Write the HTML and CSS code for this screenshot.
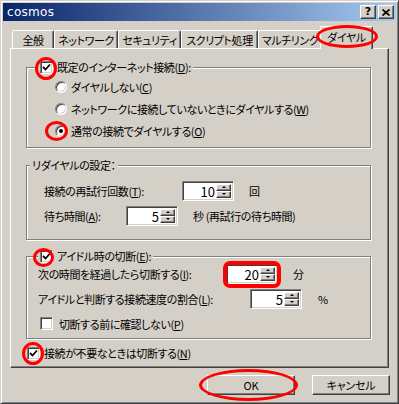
FILE: index.html
```html
<!DOCTYPE html>
<html lang="ja">
<head>
  <meta charset="UTF-8">
  <title>cosmos</title>
  <link rel="stylesheet" href="styles.css">
</head>
<body>

  <div class="window">

    <!-- タイトルバー -->
    <div class="titlebar">
      <span class="title">cosmos</span>
      <div class="caption-btns">
        <span class="cbtn help">?</span>
        <span class="cbtn">
          <svg width="8" height="7" viewBox="0 0 8 7"><path d="M0.5 0.5 L7.5 6.5 M7.5 0.5 L0.5 6.5" stroke="#000" stroke-width="1.7"/></svg>
        </span>
      </div>
    </div>

    <!-- タブ -->
    <div class="tabs">
      <div class="tab t1">全般</div>
      <div class="tab t2">ネットワーク</div>
      <div class="tab t3">セキュリティ</div>
      <div class="tab t4">スクリプト処理</div>
      <div class="tab t5">マルチリンク</div>
      <div class="tab active">ダイヤル</div>
    </div>

    <div class="panel">

      <!-- 既定のインターネット接続 -->
      <div class="group g1">
        <div class="group-title with-check">
          <span class="check on"><svg width="9" height="9" viewBox="0 0 9 9"><path d="M1 4 L3.5 6.5 L8 1.5" fill="none" stroke="#000" stroke-width="1.8"/></svg></span>
          <span>既定のインターネット接続(<u>D</u>):</span>
        </div>
        <div class="radios">
          <div class="radio-row"><span class="radio"></span><span>ダイヤルしない(<u>C</u>)</span></div>
          <div class="radio-row"><span class="radio"></span><span>ネットワークに接続していないときにダイヤルする(<u>W</u>)</span></div>
          <div class="radio-row"><span class="radio on"></span><span>通常の接続でダイヤルする(<u>O</u>)</span></div>
        </div>
      </div>

      <!-- リダイヤルの設定 -->
      <div class="group g2">
        <div class="group-title plain">リダイヤルの設定：</div>
        <div class="rows">
          <div class="row">
            <span class="lbl lbl-retry">接続の再試行回数(<u>T</u>):</span>
            <div class="spin">
              <span class="spin-val">10</span>
              <div class="spin-btns"><span class="sb up"></span><span class="sb down"></span></div>
            </div>
            <span class="unit">回</span>
          </div>
          <div class="row">
            <span class="lbl lbl-wait">待ち時間(<u>A</u>):</span>
            <div class="spin">
              <span class="spin-val">5</span>
              <div class="spin-btns"><span class="sb up"></span><span class="sb down"></span></div>
            </div>
            <span class="unit">秒 (再試行の待ち時間)</span>
          </div>
        </div>
      </div>

      <!-- アイドル時の切断 -->
      <div class="group g3">
        <div class="group-title with-check">
          <span class="check on"><svg width="9" height="9" viewBox="0 0 9 9"><path d="M1 4 L3.5 6.5 L8 1.5" fill="none" stroke="#000" stroke-width="1.8"/></svg></span>
          <span>アイドル時の切断(<u>E</u>):</span>
        </div>
        <div class="rows idle">
          <div class="row">
            <span class="lbl lbl-idle">次の時間を経過したら切断する(<u>I</u>):</span>
            <div class="spin">
              <span class="spin-val">20</span>
              <div class="spin-btns"><span class="sb up"></span><span class="sb down"></span></div>
            </div>
            <span class="unit">分</span>
          </div>
          <div class="row">
            <span class="lbl lbl-rate">アイドルと判断する接続速度の割合(<u>L</u>):</span>
            <div class="spin">
              <span class="spin-val">5</span>
              <div class="spin-btns"><span class="sb up"></span><span class="sb down"></span></div>
            </div>
            <span class="unit unit-pct">%</span>
          </div>
          <div class="row check-row">
            <span class="check"></span>
            <span>切断する前に確認しない(<u>P</u>)</span>
          </div>
        </div>
      </div>

      <div class="bottom-check">
        <span class="check on"><svg width="9" height="9" viewBox="0 0 9 9"><path d="M1 4 L3.5 6.5 L8 1.5" fill="none" stroke="#000" stroke-width="1.8"/></svg></span>
        <span>接続が不要なときは切断する(<u>N</u>)</span>
      </div>

    </div>

    <!-- ボタン -->
    <div class="actions">
      <button class="btn btn-ok">OK</button>
      <button class="btn btn-cancel">キャンセル</button>
    </div>

    <!-- 赤い丸印 -->
    <span class="mark m-tab"></span>
    <span class="mark m-check1"></span>
    <span class="mark m-radio"></span>
    <span class="mark m-check3"></span>
    <span class="mark m-check4"></span>
    <span class="mark m-spin"></span>
    <span class="mark m-ok"></span>

  </div>

</body>
</html>
```

FILE: styles.css
```css
body {
  margin: 0;
  font-family: "Noto Sans CJK JP", sans-serif;
  font-size: 11px;
  line-height: 14px;
  letter-spacing: -0.4px;
  font-feature-settings: "palt";
  white-space: nowrap;
  color: #000;
  background: #d4d0c8;
}

.window {
  position: relative;
  width: 399px;
  height: 404px;
  box-sizing: border-box;
  background: #d4d0c8;
  border: 1px solid;
  border-color: #d4d0c8 #404040 #404040 #d4d0c8;
  box-shadow: inset 1px 1px #fff, inset -1px -1px #808080;
  padding: 2px;
}

/* title bar */
.titlebar {
  height: 18px;
  display: flex;
  align-items: center;
  justify-content: space-between;
  background: linear-gradient(90deg, #0a246a, #a6caf0);
  padding: 0 2px 0 4px;
}

.title {
  font-family: "DejaVu Sans", sans-serif;
  font-size: 12px;
  color: #fff;
  letter-spacing: 0.3px;
}

.caption-btns {
  display: flex;
  gap: 2px;
}

.cbtn {
  width: 16px;
  height: 14px;
  box-sizing: border-box;
  background: #d4d0c8;
  border: 1px solid;
  border-color: #fff #404040 #404040 #fff;
  box-shadow: inset -1px -1px #808080;
  display: flex;
  align-items: center;
  justify-content: center;
}

.cbtn.help {
  font-family: "DejaVu Sans", sans-serif;
  font-weight: bold;
  font-size: 11px;
  line-height: 12px;
  letter-spacing: 0;
}

/* tabs */
.tabs {
  display: flex;
  align-items: flex-end;
  height: 22px;
  margin-top: 5px;
  padding-left: 9px;
}

.tab {
  height: 18px;
  box-sizing: border-box;
  border-top: 1px solid #fff;
  border-left: 1px solid #fff;
  border-right: 1px solid #404040;
  box-shadow: inset -1px 0 #808080;
  border-radius: 2px 2px 0 0;
  display: flex;
  align-items: center;
  justify-content: center;
  padding-top: 1px;
}

.t1 { width: 42px; }
.t2 { width: 64px; }
.t3 { width: 63px; }
.t4 { width: 77px; }
.t5 { width: 64px; }

.tab.active {
  width: 53px;
  height: 23px;
  margin: 0 -2px -1px -2px;
  background: #d4d0c8;
  z-index: 1;
  padding-top: 0;
  padding-bottom: 3px;
}

/* panel */
.panel {
  width: 379px;
  height: 320px;
  margin-left: 7px;
  box-sizing: border-box;
  border: 1px solid;
  border-color: #fff #404040 #404040 #fff;
  box-shadow: inset -1px -1px #808080;
  padding-top: 18px;
}

.group {
  width: 345px;
  box-sizing: border-box;
  margin-left: 15px;
  border: 1px solid #808080;
  box-shadow: inset 1px 1px #fff, 1px 1px #fff;
}

.group-title {
  display: flex;
  align-items: center;
  gap: 4px;
  width: max-content;
  height: 14px;
  margin-top: -8px;
  background: #d4d0c8;
}

.group-title.with-check {
  margin-left: 11px;
  padding: 0 2px;
}

.group-title.plain {
  margin-left: 3px;
  padding: 0 2px;
}

/* checkbox / radio */
.check {
  width: 13px;
  height: 13px;
  box-sizing: border-box;
  background: #fff;
  border: 1px solid;
  border-color: #808080 #fff #fff #808080;
  box-shadow: inset 1px 1px #404040, inset -1px -1px #d4d0c8;
  display: flex;
  align-items: center;
  justify-content: center;
  flex: none;
}

.radios {
  padding: 2px 0 5px 28px;
}

.radio-row {
  height: 22px;
  display: flex;
  align-items: center;
  gap: 4px;
}

.radio {
  width: 12px;
  height: 12px;
  box-sizing: border-box;
  border-radius: 50%;
  background: #fff;
  border: 1px solid;
  border-color: #808080 #fff #fff #808080;
  box-shadow: inset 1px 1px #404040, inset -1px -1px #d4d0c8;
  display: flex;
  align-items: center;
  justify-content: center;
  flex: none;
}

.radio.on::after {
  content: "";
  width: 4px;
  height: 4px;
  border-radius: 50%;
  background: #000;
}

/* rows with spinners */
.g2 {
  margin-top: 17px;
}

.g3 {
  margin-top: 16px;
}

.rows {
  display: flex;
  flex-direction: column;
  padding: 6px 0 11px 17px;
}

.row {
  height: 25px;
  display: flex;
  align-items: center;
}

.rows.idle {
  padding: 0 0 4px 11px;
  gap: 4px;
}

.rows.idle .row {
  height: 21px;
}

.lbl { flex: none; }
.lbl-retry { width: 138px; }
.lbl-wait { width: 82px; }
.lbl-idle { width: 188px; }
.lbl-rate { width: 212px; }

.unit {
  margin-left: 15px;
}

.unit-pct {
  margin-left: 16px;
}

.spin {
  width: 52px;
  height: 20px;
  box-sizing: border-box;
  background: #fff;
  border: 1px solid;
  border-color: #808080 #fff #fff #808080;
  box-shadow: inset 1px 1px #404040, inset -1px -1px #d4d0c8;
  padding: 2px;
  display: flex;
  flex: none;
}

.spin-val {
  flex: 1;
  text-align: right;
  font-size: 13px;
  line-height: 16px;
  letter-spacing: 0;
  padding-right: 1px;
}

.spin-btns {
  width: 15px;
  display: flex;
  flex-direction: column;
}

.sb {
  flex: 1;
  background: #d4d0c8;
  border: 1px solid;
  border-color: #fff #404040 #404040 #fff;
  box-shadow: inset -1px -1px #808080;
  display: flex;
  align-items: center;
  justify-content: center;
}

.sb::after {
  content: "";
  border-left: 2px solid transparent;
  border-right: 2px solid transparent;
}

.sb.up::after {
  border-bottom: 2px solid #000;
}

.sb.down::after {
  border-top: 2px solid #000;
}

.check-row {
  gap: 6px;
  padding-left: 2px;
}

.bottom-check {
  display: flex;
  align-items: center;
  gap: 4px;
  height: 14px;
  margin: 7px 0 0 16px;
}

/* buttons */
.actions {
  display: flex;
  margin-top: 7px;
  padding-left: 204px;
  gap: 17px;
}

.btn {
  height: 20px;
  box-sizing: border-box;
  font-family: "Noto Sans CJK JP", sans-serif;
  font-size: 11px;
  letter-spacing: -0.2px;
  font-feature-settings: "palt";
  background: #d4d0c8;
  border: 1px solid;
  border-color: #fff #404040 #404040 #fff;
  box-shadow: inset -1px -1px #808080;
  padding: 0;
}

.btn-ok { width: 88px; }
.btn-cancel { width: 78px; }

/* red annotations */
.mark {
  position: absolute;
  z-index: 2;
  box-sizing: border-box;
  border: 3px solid #f00;
  border-radius: 50%;
}

.m-tab { left: 315px; top: 24px; width: 62px; height: 23px; }
.m-check1 { left: 34px; top: 56px; width: 22px; height: 23px; }
.m-radio { left: 44px; top: 120px; width: 23px; height: 20px; }
.m-check3 { left: 32px; top: 247px; width: 21px; height: 19px; }
.m-check4 { left: 21px; top: 341px; width: 22px; height: 23px; }
.m-spin { left: 222px; top: 260px; width: 58px; height: 27px; border-radius: 7px; border-width: 4px; }
.m-ok { left: 198px; top: 368px; width: 99px; height: 32px; }
```
